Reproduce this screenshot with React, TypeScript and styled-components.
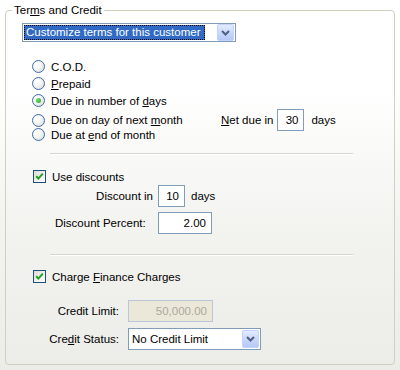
import styled, { createGlobalStyle } from "styled-components";

const GlobalStyle = createGlobalStyle`
  html, body {
    margin: 0;
    padding: 0;
  }
  body {
    font-family: "Liberation Sans", Arial, sans-serif;
    font-size: 11.5px;
    color: #000;
  }
`;

const Page = styled.div`
  width: 400px;
  height: 370px;
  overflow: hidden;
  background: linear-gradient(
    to bottom,
    #ffffff 0%,
    #ffffff 24%,
    #f3f3f0 60%,
    #ececE8 100%
  );
`;

const GroupBox = styled.fieldset`
  box-sizing: border-box;
  margin: 3px 0 0 5px;
  width: 390px;
  height: 362px;
  padding: 0;
  border: 1px solid #d0d0bf;
  border-radius: 4px;
  min-inline-size: 0;
`;

const Legend = styled.legend`
  margin-left: 6px;
  padding: 0 2px;
  height: 14px;
  line-height: 14px;
`;

const Combo = styled.div<{ $w: number; $h: number; $ml?: number; $mt?: number }>`
  box-sizing: border-box;
  width: ${(p) => p.$w}px;
  height: ${(p) => p.$h}px;
  margin: ${(p) => p.$mt ?? 0}px 0 0 ${(p) => p.$ml ?? 0}px;
  border: 1px solid #7f9db9;
  background: #fff;
  display: flex;
  align-items: center;
  padding-right: 1px;
`;

const ComboText = styled.span<{ $selected?: boolean }>`
  flex: ${(p) => (p.$selected ? "0 0 181px" : "1")};
  box-sizing: border-box;
  height: 15px;
  line-height: 13px;
  margin-left: 1px;
  padding-left: 1px;
  white-space: nowrap;
  overflow: hidden;
  color: ${(p) => (p.$selected ? "#fff" : "#000")};
  background: ${(p) => (p.$selected ? "#316ac5" : "transparent")};
  border: 1px dotted ${(p) => (p.$selected ? "#000" : "transparent")};
`;

const Spacer = styled.span`
  flex: 1;
`;

const ComboArrow = styled.span<{ $h: number }>`
  box-sizing: border-box;
  width: 17px;
  height: ${(p) => p.$h}px;
  border: 1px solid #c3d3fd;
  border-radius: 2px;
  background: linear-gradient(to bottom, #e3ebfe 0%, #c7d6fb 55%, #b6c9f6 100%);
  display: flex;
  align-items: center;
  justify-content: center;
`;

const RadioList = styled.div`
  margin: 16px 0 0 26px;
  display: flex;
  flex-direction: column;
`;

const RadioRow = styled.div`
  display: grid;
  grid-template-columns: 13px 164px auto;
  column-gap: 6px;
  align-items: center;
  height: 17px;
`;

const RadioDot = styled.span<{ $checked?: boolean }>`
  box-sizing: border-box;
  width: 13px;
  height: 13px;
  border-radius: 50%;
  border: 1px solid #3f6cae;
  background: radial-gradient(circle at 35% 35%, #ffffff 20%, #e6e6e0 70%, #d6d6ce 100%);
  display: flex;
  align-items: center;
  justify-content: center;
  &::after {
    content: "";
    display: ${(p) => (p.$checked ? "block" : "none")};
    width: 5px;
    height: 5px;
    border-radius: 50%;
    background: radial-gradient(circle at 35% 35%, #6ee06a, #21a121);
  }
`;

const NetDue = styled.div`
  display: flex;
  align-items: center;
`;

const TextBox = styled.div<{ $w: number; $disabled?: boolean }>`
  box-sizing: border-box;
  width: ${(p) => p.$w}px;
  height: 22px;
  line-height: 20px;
  padding-right: 5px;
  text-align: right;
  border: 1px solid ${(p) => (p.$disabled ? "#b9c6d8" : "#7f9db9")};
  background: ${(p) => (p.$disabled ? "#ebe8d9" : "#fff")};
  color: ${(p) => (p.$disabled ? "#aca899" : "#000")};
`;

const Unit = styled.span<{ $ml: number }>`
  margin-left: ${(p) => p.$ml}px;
`;

const Separator = styled.div<{ $mt: number }>`
  margin: ${(p) => p.$mt}px 0 0 44px;
  width: 303px;
  height: 1px;
  background: #d6d6ce;
  border-bottom: 1px solid #ffffff;
`;

const CheckRow = styled.div<{ $mt: number }>`
  display: flex;
  align-items: center;
  gap: 6px;
  height: 17px;
  margin: ${(p) => p.$mt}px 0 0 27px;
`;

const CheckBox = styled.span`
  box-sizing: border-box;
  width: 13px;
  height: 13px;
  border: 1px solid #1c5180;
  background: linear-gradient(135deg, #dcdcd5 0%, #f2f2ee 60%, #ffffff 100%);
  display: flex;
  align-items: center;
  justify-content: center;
`;

const FieldRow = styled.div<{ $ml: number; $mt: number }>`
  display: flex;
  align-items: center;
  height: 22px;
  margin: ${(p) => p.$mt}px 0 0 ${(p) => p.$ml}px;
`;

const FieldLabel = styled.span<{ $w: number; $align: "left" | "right"; $mr: number; $pl?: number }>`
  box-sizing: border-box;
  width: ${(p) => p.$w}px;
  margin-right: ${(p) => p.$mr}px;
  padding-left: ${(p) => p.$pl ?? 0}px;
  text-align: ${(p) => p.$align};
  white-space: nowrap;
`;

const Chevron = () => (
  <svg width="9" height="6" viewBox="0 0 9 6">
    <path d="M1 1 L4.5 4.5 L8 1" stroke="#4d6185" strokeWidth="2" fill="none" />
  </svg>
);

const Tick = () => (
  <svg width="9" height="9" viewBox="0 0 9 9">
    <path d="M1.2 4.2 L3.4 6.6 L7.8 1.6" stroke="#21a121" strokeWidth="2" fill="none" />
  </svg>
);

const terms = [
  { key: "cod", label: <>C.O.D.</> },
  { key: "prepaid", label: <><u>P</u>repaid</> },
  { key: "days", label: <>Due in number of <u>d</u>ays</>, checked: true },
  { key: "next", label: <>Due on day of next <u>m</u>onth</>, netDue: true },
  { key: "end", label: <>Due at <u>e</u>nd of month</> },
];

export default function App() {
  return (
    <Page>
      <GlobalStyle />
      <GroupBox>
        <Legend>
          Ter<u>m</u>s and Credit
        </Legend>

        <Combo $w={214} $h={19} $ml={16} $mt={6}>
          <ComboText $selected>Customize terms for this customer</ComboText>
          <Spacer />
          <ComboArrow $h={17}>
            <Chevron />
          </ComboArrow>
        </Combo>

        <RadioList>
          {terms.map((t) => (
            <RadioRow key={t.key}>
              <RadioDot $checked={t.checked} />
              <span>{t.label}</span>
              {t.netDue && (
                <NetDue>
                  <span>
                    <u>N</u>et due in
                  </span>
                  <Unit $ml={4} />
                  <TextBox $w={27}>30</TextBox>
                  <Unit $ml={7}>days</Unit>
                </NetDue>
              )}
            </RadioRow>
          ))}
        </RadioList>

        <Separator $mt={10} />

        <CheckRow $mt={13}>
          <CheckBox>
            <Tick />
          </CheckBox>
          <span>Use discounts</span>
        </CheckRow>
        <FieldRow $ml={46} $mt={0}>
          <FieldLabel $w={101} $align="right" $mr={5}>
            Discount in
          </FieldLabel>
          <TextBox $w={27}>10</TextBox>
          <Unit $ml={6}>days</Unit>
        </FieldRow>
        <FieldRow $ml={46} $mt={5}>
          <FieldLabel $w={101} $align="left" $mr={5} $pl={3}>
            Discount Percent:
          </FieldLabel>
          <TextBox $w={54}>2.00</TextBox>
        </FieldRow>

        <Separator $mt={20} />

        <CheckRow $mt={12}>
          <CheckBox>
            <Tick />
          </CheckBox>
          <span>
            Charge <u>F</u>inance Charges
          </span>
        </CheckRow>
        <FieldRow $ml={34} $mt={15}>
          <FieldLabel $w={79} $align="right" $mr={9}>
            Credit Limit:
          </FieldLabel>
          <TextBox $w={85} $disabled>
            50,000.00
          </TextBox>
        </FieldRow>
        <FieldRow $ml={34} $mt={6}>
          <FieldLabel $w={79} $align="right" $mr={9}>
            Cre<u>d</u>it Status:
          </FieldLabel>
          <Combo $w={133} $h={22}>
            <ComboText>No Credit Limit</ComboText>
            <ComboArrow $h={18}>
              <Chevron />
            </ComboArrow>
          </Combo>
        </FieldRow>
      </GroupBox>
    </Page>
  );
}
